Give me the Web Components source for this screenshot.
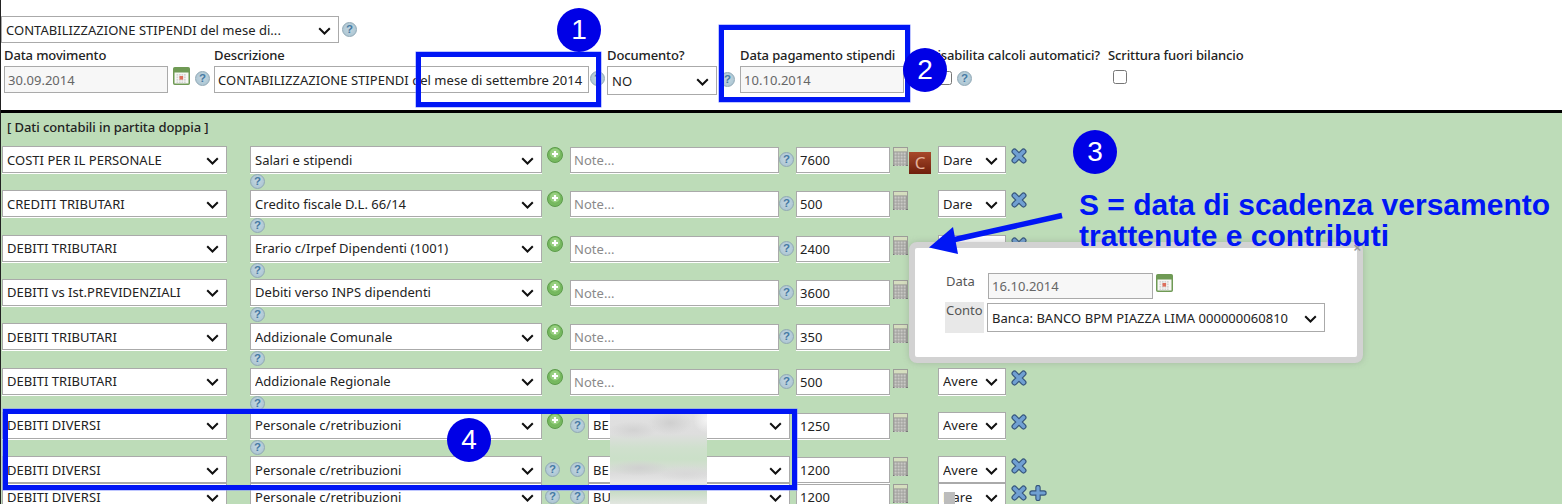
<!DOCTYPE html>
<html lang="it">
<head>
<meta charset="utf-8">
<title>Contabilizzazione stipendi</title>
<style>
    html, body {
        margin: 0;
        height: 504px;
        overflow: hidden;
        background: #fff;
    }
    body {
        font-family: "Noto Sans", "Liberation Sans", sans-serif;
        font-size: 13px;
        color: #222;
    }
</style>
</head>
<body>
<x-app></x-app>
<script>
const FIELD_CSS = `
    * { box-sizing: border-box; }
    select, input[type=text] {
        display: block;
        font: inherit;
        letter-spacing: .03px;
        color: #222;
        background-color: #fff;
        border: 1px solid #aaa;
        border-radius: 0;
        margin: 0;
        outline: none;
    }
    input[type=text] { padding: 0 3px; }
    select { appearance: none; padding: 0 22px 0 4px; }
    input[readonly] { background: #f7f7f7; color: #666; }
    input::placeholder { color: #8a8a8a; opacity: 1; }
`;

class XIcon extends HTMLElement {
    connectedCallback() {
        const name = this.getAttribute('name');
        this.attachShadow({mode: 'open'});
        this.shadowRoot.innerHTML = `
            <style>
            :host { display: block; flex: none; line-height: 0; }
            .help {
                display: block;
                box-sizing: border-box;
                width: 15px;
                height: 15px;
                border-radius: 50%;
                border: 1.5px solid #90a8b5;
                background: radial-gradient(circle at 50% 45%, #c4d7e1, #a6c1cf);
                color: #467aa3;
                font: bold 11.5px/12px "Liberation Sans", sans-serif;
                text-align: center;
            }
            svg { display: block; }
            </style>
            ${XIcon.markup(name)}
        `;
    }

    static markup(name) {
        if (name === 'help') {
            return '<span class="help">?</span>';
        }
        if (name === 'plus') {
            return `<svg width="16" height="16" viewBox="0 0 16 16">
                <circle cx="8" cy="8" r="7.5" fill="#76b85f" stroke="#5d9c4b"/>
                <circle cx="8" cy="6.5" r="5" fill="#97cf80"/>
                <path d="M8 4v6M5 7h6" stroke="#fff" stroke-width="2.2"/>
            </svg>`;
        }
        if (name === 'remove') {
            return `<svg width="16" height="16" viewBox="0 0 16 16">
                <path d="M3.5 3.5l9 9M12.5 3.5l-9 9" stroke="#35557c" stroke-width="6" stroke-linecap="round"/>
                <path d="M3.5 3.5l9 9M12.5 3.5l-9 9" stroke="#70a0d2" stroke-width="3.6" stroke-linecap="round"/>
            </svg>`;
        }
        if (name === 'add') {
            return `<svg width="18" height="16" viewBox="0 0 18 16">
                <path d="M9 2.5v11M3 8h12" stroke="#35557c" stroke-width="5.4" stroke-linecap="round"/>
                <path d="M9 2.5v11M3 8h12" stroke="#70a0d2" stroke-width="3.2" stroke-linecap="round"/>
            </svg>`;
        }
        if (name === 'calendar') {
            let cells = '';
            for (let y = 7; y < 15; y += 2.5) {
                for (let x = 3.5; x < 13; x += 2.5) {
                    cells += `<rect x="${x}" y="${y}" width="1.7" height="1.7" fill="#d4d4d4"/>`;
                }
            }
            return `<svg width="17" height="18" viewBox="0 0 17 18">
                <rect x=".75" y=".75" width="15.5" height="16.5" rx="1" fill="#f7f7f4" stroke="#6f9a55" stroke-width="1.5"/>
                <rect x="1" y="1" width="15" height="4.5" fill="#6f9a55"/>
                ${cells}
                <rect x="6.5" y="9" width="3.6" height="3.6" fill="#dd6f5c"/>
            </svg>`;
        }
        if (name === 'calc') {
            let keys = '';
            for (let y = 5.5; y < 18; y += 3) {
                for (let x = 1.5; x < 13; x += 3) {
                    keys += `<rect x="${x}" y="${y}" width="2.2" height="2.2" fill="#c9c9c5"/>`;
                }
            }
            return `<svg width="15" height="19" viewBox="0 0 15 19">
                <rect width="15" height="19" fill="#9c9c98"/>
                <rect x="1" y="1" width="13" height="3.4" fill="#d5deBf"/>
                <rect y="18" width="15" height="1" fill="#777"/>
                ${keys}
            </svg>`;
        }
        return '';
    }
}
customElements.define('x-icon', XIcon);

class XSelect extends HTMLElement {
    connectedCallback() {
        const text = this.getAttribute('value');
        this.attachShadow({mode: 'open'});
        this.shadowRoot.innerHTML = `
            <style>
            ${FIELD_CSS}
            :host { display: block; flex: none; position: relative; }
            select { width: 100%; height: 100%; }
            :host([underline]) select { box-shadow: 0 1px 0 #fff; }
            svg { position: absolute; right: 8px; top: 50%; margin-top: -3px; pointer-events: none; }
            </style>
            <select><option>${text}</option></select>
            <svg width="13" height="8" viewBox="0 0 13 8"><path d="M1.2 1.2l5.3 5.3 5.3-5.3" fill="none" stroke="#111" stroke-width="2"/></svg>
        `;
    }
}
customElements.define('x-select', XSelect);

class XInput extends HTMLElement {
    connectedCallback() {
        const value = this.getAttribute('value') || '';
        const hint = this.getAttribute('hint') || '';
        const locked = this.hasAttribute('locked') ? 'readonly' : '';
        this.attachShadow({mode: 'open'});
        this.shadowRoot.innerHTML = `
            <style>
            ${FIELD_CSS}
            :host { display: block; flex: none; }
            input[type=text] { width: 100%; height: 100%; }
            :host([underline]) input { box-shadow: 0 1px 0 #fff; }
            </style>
            <input type="text" value="${value}" placeholder="${hint}" ${locked}>
        `;
    }
}
customElements.define('x-input', XInput);

class XField extends HTMLElement {
    constructor() {
        super();
        this.attachShadow({mode: 'open'});
        this.shadowRoot.innerHTML = `
            <style>
            :host { display: block; flex: none; }
            label {
                display: block;
                height: 22px;
                line-height: 22px;
                font-weight: 500;
                white-space: nowrap;
                color: #222;
                letter-spacing: -.12px;
            }
            .control { display: flex; align-items: flex-start; height: 30px; }
            </style>
            <label></label>
            <div class="control"><slot></slot></div>
        `;
    }

    connectedCallback() {
        this.shadowRoot.querySelector('label').textContent = this.getAttribute('label');
    }
}
customElements.define('x-field', XField);

class XLedgerRow extends HTMLElement {
    connectedCallback() {
        const get = (name) => this.getAttribute(name) || '';
        const bank = this.getAttribute('bank');
        const tight = this.hasAttribute('tight');
        const first = tight
            ? '<x-icon name="help" style="margin:6px 0 0 3px"></x-icon>'
            : '<x-icon name="plus" style="margin:1px 0 0 5px"></x-icon>';
        const middle = bank
            ? `<x-icon name="help" style="margin:6px 0 0 ${tight ? 10 : 7}px"></x-icon>
               <x-select underline value="${bank}" style="width:202px;height:27px;margin-left:3px"></x-select>`
            : `<x-input underline hint="Note..." style="width:209px;height:26px;margin:1px 0 0 7px"></x-input>
               <x-icon name="help" style="margin:6px 0 0 0"></x-icon>`;
        this.attachShadow({mode: 'open'});
        this.shadowRoot.innerHTML = `
            <style>
            * { box-sizing: border-box; }
            :host { display: block; }
            .line { display: flex; align-items: flex-start; height: 27px; padding-left: 1px; }
            .under { height: 17.33px; padding: 1px 0 0 249px; }
            .mid { display: flex; align-items: flex-start; flex: none; }
            .tail { display: flex; gap: 2px; margin: 2px 0 0 5px; }
            .calc-slot { position: relative; width: 48px; flex: none; padding: 1px 0 0 3px; }
            .calc-slot ::slotted(*) { position: absolute; left: 19px; top: 6px; }
            </style>
            <div class="line">
                <x-select underline value="${get('group')}" style="width:225px;height:27px"></x-select>
                <x-select underline value="${get('account')}" style="width:292px;height:27px;margin-left:23px"></x-select>
                <div class="mid" style="width:${bank ? 248 : 251}px">
                    ${first}${middle}
                </div>
                <x-input underline value="${get('amount')}" style="width:94px;height:26px;margin:1px 0 0 ${bank ? 6 : 3}px"></x-input>
                <div class="calc-slot">
                    <x-icon name="calc"></x-icon>
                    <slot></slot>
                </div>
                <x-select underline value="${get('side')}" style="width:68px;height:27px"></x-select>
                <div class="tail">
                    <x-icon name="remove"></x-icon>
                    ${this.hasAttribute('last') ? '<x-icon name="add"></x-icon>' : ''}
                </div>
            </div>
            ${tight ? '' : '<div class="under"><x-icon name="help"></x-icon></div>'}
        `;
    }
}
customElements.define('x-ledger-row', XLedgerRow);

class XCornerMark extends HTMLElement {
    constructor() {
        super();
        this.attachShadow({mode: 'open'});
        this.shadowRoot.innerHTML = `
            <style>
            :host {
                display: block;
                width: 22px;
                height: 22px;
                background: linear-gradient(#a8492a, #6f1f0c);
                color: #e3b09a;
                font: 17px/22px "Noto Sans", sans-serif;
                text-align: center;
            }
            </style>
            C
        `;
    }
}
customElements.define('x-corner-mark', XCornerMark);

class XMovementForm extends HTMLElement {
    constructor() {
        super();
        this.attachShadow({mode: 'open'});
        this.shadowRoot.innerHTML = `
            <style>
            :host {
                display: block;
                height: 110px;
                padding: 16px 0 0 0;
                box-sizing: border-box;
            }
            .top { display: flex; align-items: flex-start; height: 27px; }
            .fields { display: flex; padding-left: 3px; margin-top: 1px; }
            .check { display: block; width: 14px; height: 14px; margin: 0; }
            </style>
            <div class="top">
                <x-select value="CONTABILIZZAZIONE STIPENDI del mese di..." style="width:338px;height:27px"></x-select>
                <x-icon name="help" style="margin:6px 0 0 3px"></x-icon>
            </div>
            <div class="fields">
                <x-field label="Data movimento" style="width:210px">
                    <x-input locked value="30.09.2014" style="width:164px;height:27px"></x-input>
                    <x-icon name="calendar" style="margin:1px 0 0 5px"></x-icon>
                    <x-icon name="help" style="margin:5px 0 0 5px"></x-icon>
                </x-field>
                <x-field label="Descrizione" style="width:393px">
                    <x-input value="CONTABILIZZAZIONE STIPENDI del mese di settembre 2014" style="width:375px;height:27px"></x-input>
                    <x-icon name="help" style="margin:5px 0 0 1px"></x-icon>
                </x-field>
                <x-field label="Documento?" style="width:133px">
                    <x-select value="NO" style="width:110px;height:29px"></x-select>
                    <x-icon name="help" style="margin:6px 0 0 3px"></x-icon>
                </x-field>
                <x-field label="Data pagamento stipendi" style="width:188px">
                    <x-input locked value="10.10.2014" style="width:164px;height:27px"></x-input>
                </x-field>
                <x-field label="Disabilita calcoli automatici?" style="width:180px">
                    <div style="display:flex;width:100%;padding:5px 0 0 10px;gap:5px">
                        <input class="check" type="checkbox">
                        <x-icon name="help"></x-icon>
                    </div>
                </x-field>
                <x-field label="Scrittura fuori bilancio">
                    <div style="padding:4px 0 0 5px"><input class="check" type="checkbox"></div>
                </x-field>
            </div>
        `;
    }
}
customElements.define('x-movement-form', XMovementForm);

class XLedger extends HTMLElement {
    constructor() {
        super();
        this.attachShadow({mode: 'open'});
        this.shadowRoot.innerHTML = `
            <style>
            :host {
                display: block;
                height: 394px;
                background: #bddcb8;
                border-top: 3px solid #000;
                box-sizing: border-box;
            }
            h2 {
                margin: 0;
                height: 33px;
                padding: 4px 0 0 6px;
                font: inherit;
                line-height: 20px;
                font-weight: 500;
                letter-spacing: -.08px;
                box-sizing: border-box;
            }
            </style>
            <h2>[ Dati contabili in partita doppia ]</h2>
            <slot></slot>
        `;
    }
}
customElements.define('x-ledger', XLedger);

class XPopover extends HTMLElement {
    constructor() {
        super();
        this.attachShadow({mode: 'open'});
        this.shadowRoot.innerHTML = `
            <style>
            :host {
                position: absolute;
                left: 909px;
                top: 242px;
                width: 454px;
                height: 121px;
                box-sizing: border-box;
                border: 6px solid #d2d2d2;
                border-radius: 8px;
                background: #fff;
                padding: 25px 0 0 30px;
                box-shadow: 0 0 6px rgba(120, 120, 120, .35);
            }
            .close {
                position: absolute;
                right: -4px;
                top: -7px;
                color: #999;
                font: bold 13px/13px "Liberation Sans", sans-serif;
            }
            .row { display: flex; }
            .name {
                width: 39px;
                margin-right: 3px;
                color: #555;
                line-height: 16px;
            }
            .name.shade { background: #e8e8e8; height: 31px; margin-top: 3px; padding-left: 1px; box-sizing: border-box; }
            </style>
            <span class="close">×</span>
            <div class="row">
                <span class="name" style="padding-left:1px">Data</span>
                <x-input locked value="16.10.2014" style="width:165px;height:26px"></x-input>
                <x-icon name="calendar" style="margin:1px 0 0 3px"></x-icon>
            </div>
            <div class="row">
                <span class="name shade">Conto</span>
                <x-select value="Banca: BANCO BPM PIAZZA LIMA 000000060810" style="width:338px;height:29px;margin-top:4px"></x-select>
            </div>
        `;
    }
}
customElements.define('x-popover', XPopover);

// Cornice blu di annotazione, posata sopra il modulo
class XFrame extends HTMLElement {
    constructor() {
        super();
        this.attachShadow({mode: 'open'});
        this.shadowRoot.innerHTML = `
            <style>
            :host {
                position: absolute;
                box-sizing: border-box;
                border: 5px solid #0016f5;
                box-shadow: 0 0 0 .5px #7f8cff;
            }
            </style>
        `;
    }
}
customElements.define('x-frame', XFrame);

class XBadge extends HTMLElement {
    constructor() {
        super();
        this.attachShadow({mode: 'open'});
        this.shadowRoot.innerHTML = `
            <style>
            :host {
                position: absolute;
                width: 44px;
                height: 44px;
                border-radius: 50%;
                background: #0000e6;
                color: #fff;
                font: 28px/44px "Liberation Sans", sans-serif;
                text-align: center;
            }
            </style>
            <slot></slot>
        `;
    }
}
customElements.define('x-badge', XBadge);

class XNotes extends HTMLElement {
    constructor() {
        super();
        this.attachShadow({mode: 'open'});
        this.shadowRoot.innerHTML = `
            <style>
            :host { display: block; position: absolute; left: 0; top: 0; width: 1562px; height: 504px; overflow: hidden; pointer-events: none; }
            .edge { position: absolute; left: 0; top: 0; width: 1px; height: 504px; background: #222; }
            .callout {
                position: absolute;
                left: 1079px;
                top: 189px;
                margin: 0;
                color: #0016f5;
                font: bold 30px/31px "Liberation Sans", sans-serif;
                white-space: nowrap;
            }
            .arrow { position: absolute; left: 920px; top: 205px; }
            .smudge {
                position: absolute;
                left: 610px;
                top: 414px;
                width: 97px;
                height: 90px;
                overflow: hidden;
                background:
                    radial-gradient(ellipse 22px 12px at 62% 10%, #cfcfcf, transparent),
                    radial-gradient(ellipse 24px 9px at 24% 18%, #d2d2d2, transparent),
                    radial-gradient(ellipse 14px 14px at 100% 6%, #f5f5f5, transparent),
                    radial-gradient(ellipse 30px 8px at 30% 60%, #d0d0d0, transparent),
                    radial-gradient(ellipse 28px 8px at 78% 66%, #d8d8d8, transparent),
                    linear-gradient(#e0e0e0 0%, #dedede 22%, #cfe0cd 38%, #cbe0c8 50%, #dcdcdc 66%, #e6e6e6 76%, #c8dcc6 86%, #e2e6e0 100%);
            }
            .patch { position: absolute; left: 944px; top: 492px; width: 11px; height: 12px; background: #bcbcbc; }
            </style>
            <div class="edge"></div>
            <div class="smudge"></div>
            <div class="patch"></div>
            <x-frame style="left:416px;top:52px;width:185px;height:55px"></x-frame>
            <x-frame style="left:719px;top:25px;width:191px;height:77px"></x-frame>
            <x-frame style="left:3px;top:409px;width:794px;height:81px"></x-frame>
            <x-badge style="left:557px;top:8px">1</x-badge>
            <x-badge style="left:903px;top:48px">2</x-badge>
            <x-badge style="left:1073px;top:130px">3</x-badge>
            <x-badge style="left:447px;top:418px">4</x-badge>
            <svg class="arrow" width="150" height="50" viewBox="0 0 150 50">
                <path d="M142 10.5 L28 36" stroke="#0016f5" stroke-width="5.5"/>
                <path d="M9 42.5 L33 22 L38 49 Z" fill="#0016f5"/>
            </svg>
            <p class="callout">S = data di scadenza versamento<br>trattenute e contributi</p>
        `;
    }
}
customElements.define('x-notes', XNotes);

class XApp extends HTMLElement {
    constructor() {
        super();
        this.attachShadow({mode: 'open'});
        this.shadowRoot.innerHTML = `
            <style>
            :host {
                display: block;
                position: relative;
                width: 1562px;
                height: 504px;
                overflow: hidden;
                box-sizing: border-box;
                padding-left: 1px;
            }
            </style>
            <x-movement-form></x-movement-form>
            <x-ledger>
                <x-ledger-row group="COSTI PER IL PERSONALE" account="Salari e stipendi" amount="7600" side="Dare"><x-corner-mark></x-corner-mark></x-ledger-row>
                <x-ledger-row group="CREDITI TRIBUTARI" account="Credito fiscale D.L. 66/14" amount="500" side="Dare"></x-ledger-row>
                <x-ledger-row group="DEBITI TRIBUTARI" account="Erario c/Irpef Dipendenti (1001)" amount="2400" side="Avere"></x-ledger-row>
                <x-ledger-row group="DEBITI vs Ist.PREVIDENZIALI" account="Debiti verso INPS dipendenti" amount="3600" side="Avere"></x-ledger-row>
                <x-ledger-row group="DEBITI TRIBUTARI" account="Addizionale Comunale" amount="350" side="Avere"></x-ledger-row>
                <x-ledger-row group="DEBITI TRIBUTARI" account="Addizionale Regionale" amount="500" side="Avere"></x-ledger-row>
                <x-ledger-row group="DEBITI DIVERSI" account="Personale c/retribuzioni" amount="1250" side="Avere" bank="BE"></x-ledger-row>
                <x-ledger-row tight group="DEBITI DIVERSI" account="Personale c/retribuzioni" amount="1200" side="Avere" bank="BE"></x-ledger-row>
                <x-ledger-row tight last group="DEBITI DIVERSI" account="Personale c/retribuzioni" amount="1200" side="Dare" bank="BU"></x-ledger-row>
            </x-ledger>
            <x-popover></x-popover>
            <x-notes></x-notes>
        `;
    }
}
customElements.define('x-app', XApp);
</script>
</body>
</html>
